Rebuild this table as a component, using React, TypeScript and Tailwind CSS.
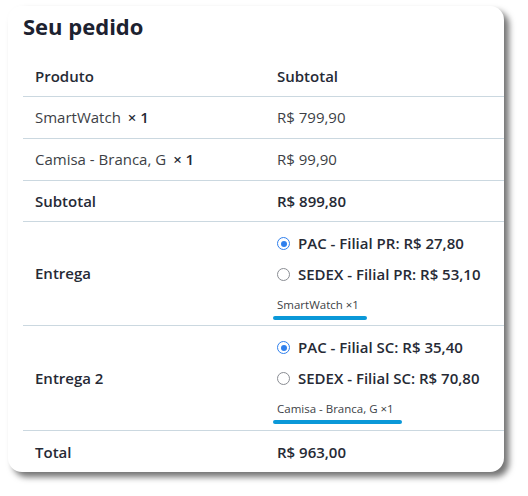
import React from "react";

type Row = { label: string; qty?: string; value: string; bold?: boolean; h: string };

const ROWS: Row[] = [
  { label: "SmartWatch", qty: "× 1", value: "R$ 799,90", h: "h-[42px]" },
  { label: "Camisa - Branca, G", qty: "× 1", value: "R$ 99,90", h: "h-[42px]" },
  { label: "Subtotal", value: "R$ 899,80", bold: true, h: "h-[41px]" },
];

const SHIPPING = [
  {
    title: "Entrega",
    options: ["PAC - Filial PR: R$ 27,80", "SEDEX - Filial PR: R$ 53,10"],
    items: "SmartWatch ×1",
    bar: "w-[94px]",
    h: "h-[104px]",
  },
  {
    title: "Entrega 2",
    options: ["PAC - Filial SC: R$ 35,40", "SEDEX - Filial SC: R$ 70,80"],
    items: "Camisa - Branca, G ×1",
    bar: "w-[129px]",
    h: "h-[105px]",
  },
];

function Radio({ checked }: { checked: boolean }) {
  return checked ? (
    <span className="flex h-[13px] w-[13px] items-center justify-center rounded-full border-[1.5px] border-[#2f80ed]">
      <span className="h-[6px] w-[6px] rounded-full bg-[#2f80ed]" />
    </span>
  ) : (
    <span className="h-[13px] w-[13px] rounded-full border-[1.5px] border-[#8a8d93]" />
  );
}

export default function App() {
  return (
    <div className="h-[496px] w-[528px] bg-white pl-[8px] pt-[6px]" style={{ fontFamily: '"Open Sans", "Noto Sans", sans-serif' }}>
      <div className="h-[466px] w-[496px] overflow-hidden rounded-[14px] bg-white pl-[15px] shadow-[5px_5px_6px_rgba(0,0,0,0.55)]">
        <h2 className="text-[22px] font-bold leading-[40px] text-[#1d2230]">Seu pedido</h2>
        <div className="mt-[10px] grid grid-cols-[242px_1fr] text-[15px] text-[#3d3f46]">
          <div className="flex h-[41px] items-center border-b border-[#cbd8e0] pl-[12px] font-semibold text-[#262a35]">Produto</div>
          <div className="flex h-[41px] items-center border-b border-[#cbd8e0] pl-[12px] font-semibold text-[#262a35]">Subtotal</div>

          {ROWS.map((r) => (
            <React.Fragment key={r.label}>
              <div className={`flex items-center border-b border-[#cbd8e0] pl-[12px] ${r.h} ${r.bold ? "font-semibold text-[#262a35]" : ""}`}>
                {r.label}
                {r.qty && <span className="ml-[7px] font-semibold text-[#262a35]">{r.qty}</span>}
              </div>
              <div className={`flex items-center border-b border-[#cbd8e0] pl-[12px] ${r.h} ${r.bold ? "font-semibold text-[#262a35]" : ""}`}>
                {r.value}
              </div>
            </React.Fragment>
          ))}

          {SHIPPING.map((s) => (
            <React.Fragment key={s.title}>
              <div className={`flex items-center border-b border-[#cbd8e0] pl-[12px] font-semibold text-[#262a35] ${s.h}`}>{s.title}</div>
              <div className={`border-b border-[#cbd8e0] pl-[12px] pt-[6px] ${s.h}`}>
                {s.options.map((o, i) => (
                  <div key={o} className="flex h-[31px] items-center gap-[8px] font-semibold text-[#262a35]">
                    <Radio checked={i === 0} />
                    <span>{o}</span>
                  </div>
                ))}
                <div className="mt-[8px] text-[11.5px] leading-[14px] text-[#3d3f46]">{s.items}</div>
                <div className={`-ml-[4px] mt-[4px] h-[4px] rounded-full bg-[#0a98d8] ${s.bar}`} />
              </div>
            </React.Fragment>
          ))}

          <div className="flex h-[42px] items-center pl-[12px] font-semibold text-[#262a35]">Total</div>
          <div className="flex h-[42px] items-center pl-[12px] font-semibold text-[#262a35]">R$ 963,00</div>
        </div>
      </div>
    </div>
  );
}
